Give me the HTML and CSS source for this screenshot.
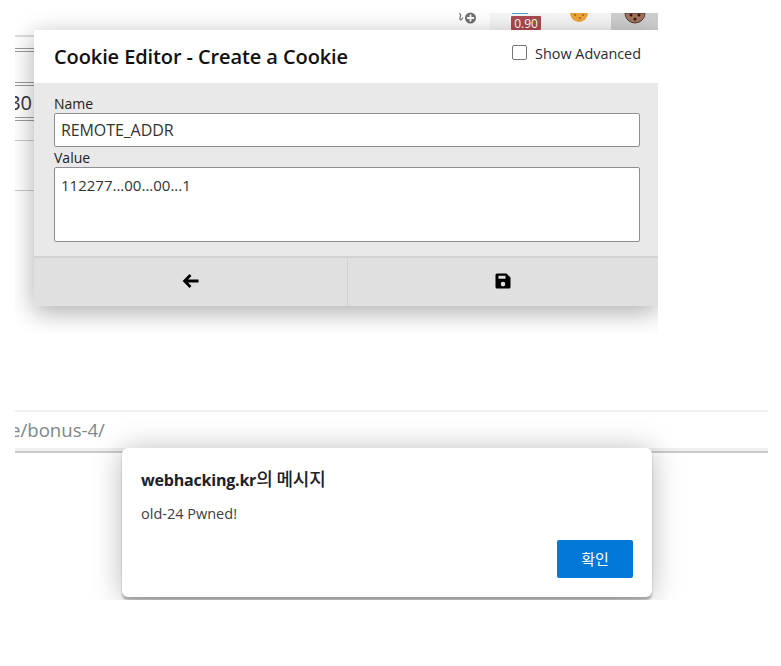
FILE: index.html
```html
<!DOCTYPE html>
<html lang="en">
<head>
<meta charset="utf-8">
<title>Cookie Editor</title>
<link rel="stylesheet" href="styles.css">
</head>
<body>
<section class="shot-top">
  <div class="backdrop">
    <i class="rule r1"></i><i class="rule dbl r2"></i><i class="rule dbl r3"></i>
    <span class="frag">30</span>
    <i class="rule dbl r4"></i><i class="rule r5"></i><i class="rule r6"></i>
  </div>
  <div class="toolbar">
    <span class="ext-glyph">
      <svg width="21" height="13" viewBox="0 0 21 13"><path d="M3 1.500c2.500 0 1.500 2.500 1 4.500s.5 3.500 3-.5" fill="none" stroke="#666" stroke-width="1.100"/><circle cx="14.500" cy="6" r="5.500" fill="#707070"/><path d="M11 6h7M14.500 2.500v7" stroke="#fff" stroke-width="1.800"/></svg>
    </span>
    <div class="tool-tray">
      <span class="tool tool-badge"><i class="badge-top"></i><b class="badge">0.90</b></span>
      <span class="tool tool-cookie">
        <svg width="20" height="11" viewBox="0 0 20 11"><path d="M1 0a9 9 0 0 0 18 0z" fill="#eda33a"/><circle cx="6" cy="2" r="1" fill="#a3601c"/><circle cx="11" cy="5" r="1" fill="#a3601c"/><circle cx="14" cy="2" r="1" fill="#a3601c"/></svg>
      </span>
      <span class="tool tool-active">
        <svg width="22" height="11" viewBox="0 0 22 11"><path d="M1 0a10 10 0 0 0 20 0z" fill="#a5735c" stroke="#4c3a33"/><circle cx="7" cy="2" r="1.500" fill="#2b1a16"/><circle cx="15" cy="2" r="1.500" fill="#2b1a16"/><circle cx="11" cy="6" r="1.500" fill="#2b1a16"/></svg>
      </span>
    </div>
  </div>
  <div class="panel">
    <header class="panel-head">
      <h1>Cookie Editor - Create a Cookie</h1>
      <label class="advanced"><span class="check"></span>Show Advanced</label>
    </header>
    <div class="panel-body">
      <div class="label">Name</div>
      <div class="input input-name">REMOTE_ADDR</div>
      <div class="label label-value">Value</div>
      <div class="input textarea">112277...00...00...1</div>
    </div>
    <footer class="panel-foot">
      <button class="foot-btn" type="button" aria-label="Back">
        <svg width="18" height="16" viewBox="0 0 18 16"><path d="M8.500 2 2.600 8l5.900 6M3 8h13.500" fill="none" stroke="#000" stroke-width="2.800"/></svg>
      </button>
      <button class="foot-btn foot-save" type="button" aria-label="Save">
        <svg width="16" height="16" viewBox="0 0 16 16"><path fill-rule="evenodd" d="M2 0.500h9.500L15.500 4.500V14a1.500 1.500 0 0 1-1.500 1.500H2A1.500 1.500 0 0 1 .5 14V2A1.500 1.500 0 0 1 2 .5zM3.500 2.800v3h7v-3zM8 8.800a2.300 2.300 0 1 0 0 4.600 2.300 2.300 0 0 0 0-4.600z" fill="#000"/></svg>
      </button>
    </footer>
  </div>
</section>
<section class="shot-bottom">
  <div class="address">e/bonus-4/</div>
  <div class="dialog">
    <h2>webhacking.kr<span class="ko">의 메시지</span></h2>
    <p>old-24 Pwned!</p>
    <div class="dialog-actions"><button class="ok" type="button">확인</button></div>
  </div>
</section>
</body>
</html>
```
FILE: styles.css
```css
html, body { margin: 0; padding: 0; background: #fff; }
body { width: 781px; height: 666px; overflow: hidden; font-family: "Open Sans", "Noto Sans", sans-serif; color: #111; }

.shot-top { position: relative; margin-left: 15px; width: 643px; height: 333px; overflow: hidden; }
.backdrop { position: absolute; left: 0; top: 0; width: 19px; height: 200px; overflow: hidden; }
.rule { position: absolute; left: 0; right: 0; height: 1px; background: #c9c9c9; }
.rule.dbl { height: 4px; background: none; border-top: 1px solid #999; border-bottom: 1px solid #999; box-sizing: border-box; }
.r1 { top: 35px; height: 2px; background: #dcdcdc; }
.r2 { top: 48px; }
.r3 { top: 82px; }
.r4 { top: 117px; }
.r5 { top: 140px; }
.r6 { top: 190px; }
.frag { position: absolute; right: 2px; top: 91px; font-size: 20px; line-height: 24px; color: #333; white-space: nowrap; }

.toolbar { position: absolute; top: 13px; left: 440px; right: 0; height: 17px; display: flex; }
.ext-glyph { width: 35px; display: flex; justify-content: flex-start; padding-left: 1px; box-sizing: border-box; }
.ext-glyph svg { margin-top: -1px; }
.tool-tray { margin-left: auto; width: 168px; display: flex; background: #f6f6f6; }
.tool { display: flex; justify-content: center; overflow: hidden; position: relative; }
.tool-badge { width: 56px; }
.tool-cookie { width: 65px; }
.tool-active { width: 47px; background: #cfcfcf; }
.badge-top { position: absolute; top: 0; left: 22px; width: 16px; height: 1px; background: #4aa3c7; }
.badge { position: absolute; top: 3px; left: 21px; width: 30px; height: 14px; background: #ad4a50; color: #fff; font: 400 12px/15px "Open Sans", sans-serif; text-align: center; border-radius: 1px; }

.panel { position: absolute; top: 30px; left: 19px; width: 624px; height: 276px; display: flex; flex-direction: column; background: #fff; box-shadow: 0 6px 24px rgba(0,0,0,.33); }
.panel-head { height: 53px; flex: none; display: flex; justify-content: space-between; align-items: flex-start; padding: 0 17px 0 20px; box-sizing: border-box; }
.panel-head h1 { margin: 14px 0 0; font-size: 20px; line-height: 26px; font-weight: 600; color: #111; letter-spacing: -.1px; }
.advanced { display: flex; align-items: center; margin-top: 14px; font-size: 14.400px; line-height: 20px; color: #2a2a33; }
.check { width: 13px; height: 13px; margin-right: 8px; margin-top: -3px; border: 1px solid #777; border-radius: 2px; background: #fff; }
.panel-body { flex: 1; background: #e9e9e9; padding: 11px 18px 0 20px; }
.label { font-size: 14px; line-height: 19px; color: #222; }
.label-value { padding-top: 2px; line-height: 18px; }
.input { height: 34px; box-sizing: border-box; border: 1px solid #8f8f8f; border-radius: 2px; background: #fff; padding: 0 6px; font-size: 15px; line-height: 33px; color: #333; }
.input-name { font-size: 16px; letter-spacing: -.1px; }
.textarea { height: 75px; line-height: 35px; }
.panel-foot { height: 50px; flex: none; display: grid; grid-template-columns: 313px 1fr; background: #e0e0e0; border-top: 2px solid #d2d2d2; box-sizing: border-box; }
.foot-btn { margin: 0; padding: 0 0 2px; border: 0; background: none; display: flex; align-items: center; justify-content: center; }
.foot-save { border-left: 1px solid #d2d2d2; }

.shot-bottom { position: relative; margin: 77px 0 0 15px; width: 753px; height: 190px; overflow: hidden; }
.address { border-top: 2px solid #f0f0f0; border-bottom: 3px solid #f0f0f0; height: 36px; box-shadow: 0 2px 0 #c9c9c9; overflow: hidden; font-size: 18.600px; line-height: 36px; color: #80868b; text-indent: -5px; }
.dialog { position: absolute; top: 38px; left: 107px; width: 530px; height: 149px; box-sizing: border-box; background: #fff; border-radius: 6px; padding: 19px; display: flex; flex-direction: column; box-shadow: 0 2px 30px rgba(0,0,0,.28), 0 3px 2px rgba(0,0,0,.28); }
.dialog h2 { margin: 0; font: 700 16px/22px "Open Sans", "Noto Sans CJK KR", sans-serif; color: #202124; letter-spacing: -.2px; }
.ko { font: 500 18px/22px "Noto Sans CJK KR", sans-serif; }
.dialog p { margin: 13px 0 0; font: 400 14.500px/20px "Open Sans", "Noto Sans CJK KR", sans-serif; color: #3c4043; }
.dialog-actions { margin-top: auto; display: flex; justify-content: flex-end; }
.ok { width: 76px; height: 38px; border: 0; border-radius: 2px; background: #0078d7; color: #fff; font: 400 15px/20px "Noto Sans CJK KR", sans-serif; }
```
